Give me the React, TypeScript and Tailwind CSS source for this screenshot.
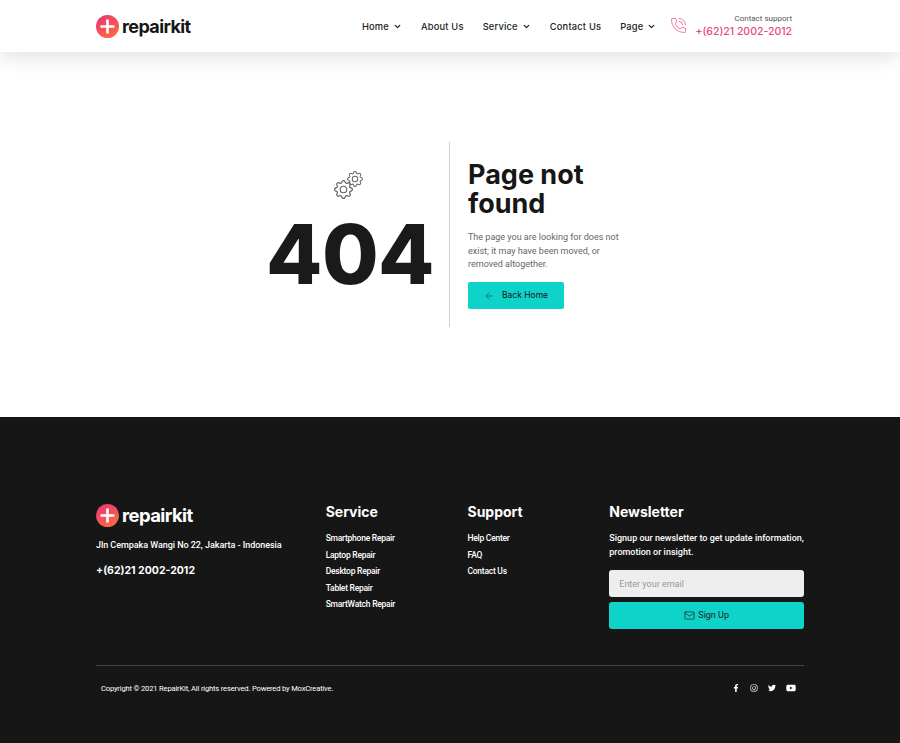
import React from 'react';
import { ArrowLeft, ChevronDown, Mail, PhoneCall } from 'lucide-react';
import { BsGear } from 'react-icons/bs';
import { FaFacebookF, FaInstagram, FaTwitter, FaYoutube } from 'react-icons/fa';

const NAV_ITEMS = [
  { label: 'Home', caret: true },
  { label: 'About Us', caret: false },
  { label: 'Service', caret: true },
  { label: 'Contact Us', caret: false },
  { label: 'Page', caret: true },
];

const SERVICE_LINKS = ['Smartphone Repair', 'Laptop Repair', 'Desktop Repair', 'Tablet Repair', 'SmartWatch Repair'];
const SUPPORT_LINKS = ['Help Center', 'FAQ', 'Contact Us'];

const Logo = ({ dark }: { dark?: boolean }) => (
  <div className="flex items-center gap-[3px]">
    <svg width="23" height="23" viewBox="0 0 23 23">
      <defs>
        <linearGradient id={dark ? 'logo-d' : 'logo-l'} x1="0.2" y1="0" x2="0.8" y2="1">
          <stop offset="0" stopColor="#e8386f" />
          <stop offset="1" stopColor="#ff6b45" />
        </linearGradient>
      </defs>
      <circle cx="11.5" cy="11.5" r="11.5" fill={`url(#${dark ? 'logo-d' : 'logo-l'})`} />
      <path d="M11.5 4.5v14M4.5 11.5h14" stroke="#fff" strokeWidth="2.6" />
    </svg>
    <span
      className={`font-['Inter',sans-serif] leading-[23px] font-bold tracking-[-0.6px] ${
        dark ? 'text-[18.5px] text-white' : 'text-[18px] text-[#161616]'
      }`}
    >
      repairkit
    </span>
  </div>
);

const FooterHeading = ({ children }: { children: React.ReactNode }) => (
  <h3 className="-mt-px font-['Inter',sans-serif] text-[14px] leading-[18px] font-bold text-white">{children}</h3>
);

const LinkList = ({ links }: { links: string[] }) => (
  <ul className="mt-[12px] flex flex-col gap-[5.5px]">
    {links.map(link => (
      <li key={link} className="text-[8.5px] leading-[11px] font-medium tracking-[-0.25px] text-white">
        {link}
      </li>
    ))}
  </ul>
);

export default function App() {
  return (
    <div className="min-h-[743px] bg-white font-['Roboto',sans-serif]">
      <header className="relative h-[52px] bg-white shadow-[0_5px_20px_rgba(0,0,0,0.12)]">
        <div className="mx-auto flex h-full w-[708px] items-center justify-between">
          <Logo />
          <div className="flex items-center pr-[12px]">
            <nav className="mt-[1px] flex items-center gap-[19px] font-['Inter',sans-serif] text-[9.3px] leading-[12px] font-medium tracking-[0.2px] text-[#222]">
              {NAV_ITEMS.map(item => (
                <span key={item.label} className="flex items-center gap-[4px]">
                  {item.label}
                  {item.caret && <ChevronDown size={9} strokeWidth={3.5} />}
                </span>
              ))}
            </nav>
            <PhoneCall size={17} strokeWidth={1} className="ml-[14px] -mt-[2px] text-[#e8477c]" />
            <div className="ml-[8px] text-right">
              <div className="-mt-[1px] text-[8px] leading-[11px] text-[#555]">Contact support</div>
              <div className="mt-[1px] font-['Inter',sans-serif] text-[10.5px] leading-[14px] font-medium text-[#e8477c]">
                +(62)21 2002-2012
              </div>
            </div>
          </div>
        </div>
      </header>

      <main className="flex h-[365px] items-center justify-center">
        <div className="flex h-[185px] w-[398px]">
          <div className="flex w-[198px] shrink-0 flex-col items-center">
            <div className="relative mt-[29px] mr-[4px] h-[28px] w-[29px]">
              <BsGear size={19} className="absolute bottom-0 left-0 text-[#666]" />
              <BsGear size={16} className="absolute top-0 right-0 text-[#666]" />
            </div>
            <div className="mt-[11px] font-['Inter',sans-serif] text-[82px] leading-[90px] font-extrabold tracking-[-0.5px] text-[#1a1a1a]">
              404
            </div>
          </div>
          <div className="w-px bg-[#cfcfcf]" />
          <div className="ml-[18px] flex-1 pt-[18px]">
            <h1 className="font-['Inter',sans-serif] text-[27px] leading-[29px] font-bold text-[#161616]">
              Page not
              <br />
              found
            </h1>
            <p className="mt-[13px] w-[160px] text-[9px] leading-[13.5px] text-[#666]">
              The page you are looking for does not exist; it may have been moved, or removed altogether.
            </p>
            <button className="mt-[10px] flex h-[27px] w-[96px] items-center justify-center gap-[8px] rounded-[2px] bg-[#0dd3c9] pt-px font-['Inter',sans-serif] text-[8.5px] font-normal text-[#161616]">
              <ArrowLeft size={10} strokeWidth={1} />
              Back Home
            </button>
          </div>
        </div>
      </main>

      <footer className="h-[326px] bg-[#161616] pt-[87px]">
        <div className="mx-auto w-[708px]">
          <div className="flex h-[161px]">
            <div className="w-[230px]">
              <Logo dark />
              <p className="mt-[11px] text-[9px] leading-[14px] font-medium tracking-[-0.05px] text-white">
                Jln Cempaka Wangi No 22, Jakarta - Indonesia
              </p>
              <p className="mt-[12px] font-['Inter',sans-serif] text-[10.5px] leading-[14px] font-bold text-white">
                +(62)21 2002-2012
              </p>
            </div>
            <div className="w-[142px]">
              <FooterHeading>Service</FooterHeading>
              <LinkList links={SERVICE_LINKS} />
            </div>
            <div className="w-[142px]">
              <FooterHeading>Support</FooterHeading>
              <LinkList links={SUPPORT_LINKS} />
            </div>
            <div className="w-[195px]">
              <FooterHeading>Newsletter</FooterHeading>
              <p className="mt-[10px] text-[9px] leading-[14px] font-medium text-white">
                Signup our newsletter to get update information, promotion or insight.
              </p>
              <input
                placeholder="Enter your email"
                className="mt-[11px] block h-[27px] w-full rounded-[3px] bg-[#eeeeee] px-[10px] text-[9px] outline-none placeholder:text-[#999]"
              />
              <button className="mt-[5px] flex h-[27px] w-full items-center justify-center gap-[3px] rounded-[3px] bg-[#0dd3c9] text-[9px] text-[#222]">
                <Mail size={11} strokeWidth={1.5} />
                Sign Up
              </button>
            </div>
          </div>
          <div className="h-px bg-[#444]" />
          <div className="flex h-[44px] items-center justify-between pr-[8px] pl-[5px]">
            <span className="text-[7.6px] leading-[11px] tracking-[-0.18px] text-white">
              Copyright © 2021 RepairKit, All rights reserved. Powered by MoxCreative.
            </span>
            <div className="flex items-center gap-[10px] text-[8px] text-white">
              <FaFacebookF />
              <FaInstagram />
              <FaTwitter />
              <FaYoutube size={10} />
            </div>
          </div>
        </div>
      </footer>
    </div>
  );
}
